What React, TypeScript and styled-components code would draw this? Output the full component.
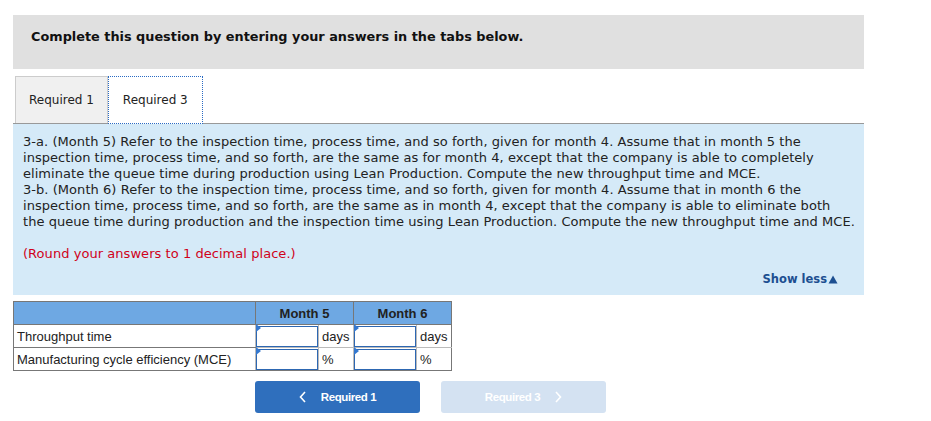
import React from "react";
import styled, { createGlobalStyle } from "styled-components";

const GlobalStyle = createGlobalStyle`
  body {
    margin: 0;
    background: #ffffff;
    font-family: "DejaVu Sans", Verdana, sans-serif;
  }
`;

const Page = styled.div`
  width: 851px;
  padding: 15px 0 0 13px;
`;

const Banner = styled.div`
  height: 54px;
  box-sizing: border-box;
  background: #e0e0e0;
  padding: 14px 0 0 18px;
  font-size: 12.85px;
  font-weight: bold;
  color: #111;
`;

const TabBar = styled.div`
  display: flex;
  align-items: flex-end;
  margin-top: 7px;
  padding-left: 2px;
  border-bottom: 1px solid #999;
`;

const Tab = styled.div<{ $active?: boolean }>`
  height: ${(p) => (p.$active ? 48 : 47)}px;
  box-sizing: border-box;
  padding: 0 ${(p) => (p.$active ? 14 : 13)}px;
  display: flex;
  align-items: center;
  font-size: 12px;
  color: #222;
  background: ${(p) => (p.$active ? "#ffffff" : "#f0f0f0")};
  border: ${(p) => (p.$active ? "1px dotted #2a6bc4" : "1px solid #cccccc")};
  border-bottom: ${(p) => (p.$active ? "1px dotted #2a6bc4" : "none")};
  margin-bottom: ${(p) => (p.$active ? -1 : 0)}px;
  position: relative;
`;

const Panel = styled.div`
  background: #d5eaf8;
  padding: 10px 10px 9px 10px;
  height: 171px;
  box-sizing: border-box;
  display: flex;
  flex-direction: column;
`;

const Question = styled.p`
  margin: 0;
  font-size: 13px;
  letter-spacing: 0.05px;
  line-height: 16px;
  white-space: nowrap;
  color: #222;
`;

const Hint = styled.p`
  margin: 16px 0 0;
  font-size: 13px;
  letter-spacing: 0.05px;
  line-height: 16px;
  color: #d0021b;
`;

const ShowLess = styled.div`
  margin-top: auto;
  align-self: flex-end;
  margin-right: 16px;
  font-size: 11.5px;
  font-weight: bold;
  color: #1d4f91;
  display: flex;
  align-items: center;
  gap: 1px;
`;

const Table = styled.table`
  margin-top: 6px;
  border-collapse: collapse;
  font-family: "Liberation Sans", Arial, sans-serif;
  font-size: 13px;
  color: #222;
`;

const HeadCell = styled.th<{ $w: number }>`
  width: ${(p) => p.$w}px;
  height: 22px;
  padding: 0;
  background: #6ea8e3;
  border: 1px solid #777;
  font-weight: bold;
  text-align: center;
  font-size: 13px;
`;

const LabelCell = styled.td`
  height: 22px;
  padding: 0 0 0 3px;
  border: 1px solid #777;
  border-right-color: #bbb;
`;

const InputCell = styled.td`
  padding: 0;
  border: 1px solid #bbb;
  width: 62px;
`;

const Field = styled.div`
  height: 21px;
  box-sizing: border-box;
  border: 1.5px solid #2d67b2;
  background: #fff;
  position: relative;
  &::before {
    content: "";
    position: absolute;
    left: 0;
    top: 0;
    border-left: 5px solid #3478cf;
    border-bottom: 4px solid transparent;
    border-top: 4px solid transparent;
    transform: translate(-1px, -3px);
  }
`;

const UnitCell = styled.td<{ $last?: boolean }>`
  padding: 0 0 0 3px;
  border: 1px solid #bbb;
  border-right-color: ${(p) => (p.$last ? "#777" : "#bbb")};
`;

const Row = styled.tr<{ $last?: boolean }>`
  & > td {
    ${(p) => (p.$last ? "border-bottom-color: #777;" : "")}
  }
`;

const Nav = styled.div`
  display: flex;
  gap: 21px;
  margin: 10px 0 0 242px;
`;

const NavButton = styled.button<{ $disabled?: boolean }>`
  width: 165px;
  height: 32px;
  border: none;
  border-radius: 3px;
  background: ${(p) => (p.$disabled ? "#d4e2f2" : "#2f6fbd")};
  color: #fff;
  font-family: "Liberation Sans", Arial, sans-serif;
  font-size: 11.5px;
  font-weight: bold;
  letter-spacing: -0.4px;
  display: flex;
  align-items: center;
  justify-content: center;
  gap: 14px;
  padding: 0;
`;

const Chevron = ({ dir }: { dir: "left" | "right" }) => (
  <svg width="8" height="12" viewBox="0 0 8 12">
    <path
      d={dir === "left" ? "M6 1 L1.5 6 L6 11" : "M2 1 L6.5 6 L2 11"}
      fill="none"
      stroke="#fff"
      strokeWidth="1.6"
    />
  </svg>
);

const questionLines = [
  "3-a. (Month 5) Refer to the inspection time, process time, and so forth, given for month 4. Assume that in month 5 the",
  "inspection time, process time, and so forth, are the same as for month 4, except that the company is able to completely",
  "eliminate the queue time during production using Lean Production. Compute the new throughput time and MCE.",
  "3-b. (Month 6) Refer to the inspection time, process time, and so forth, given for month 4. Assume that in month 6 the",
  "inspection time, process time, and so forth, are the same as in month 4, except that the company is able to eliminate both",
  "the queue time during production and the inspection time using Lean Production. Compute the new throughput time and MCE.",
];

const rows = [
  { label: "Throughput time", unit: "days" },
  { label: "Manufacturing cycle efficiency (MCE)", unit: "%" },
];

export default function App() {
  return (
    <Page>
      <GlobalStyle />
      <Banner>Complete this question by entering your answers in the tabs below.</Banner>
      <TabBar>
        <Tab>Required 1</Tab>
        <Tab $active>Required 3</Tab>
      </TabBar>
      <Panel>
        <Question>
          {questionLines.map((line, i) => (
            <React.Fragment key={i}>
              {line}
              <br />
            </React.Fragment>
          ))}
        </Question>
        <Hint>(Round your answers to 1 decimal place.)</Hint>
        <ShowLess>
          Show less
          <svg width="10" height="9" viewBox="0 0 10 9">
            <path d="M5 0.5 L9.5 8.5 L0.5 8.5 Z" fill="#1d4f91" />
          </svg>
        </ShowLess>
      </Panel>
      <Table>
        <thead>
          <tr>
            <HeadCell $w={241} />
            <HeadCell $w={97} colSpan={2}>Month 5</HeadCell>
            <HeadCell $w={97} colSpan={2}>Month 6</HeadCell>
          </tr>
        </thead>
        <tbody>
          {rows.map((r, i) => (
            <Row key={r.label} $last={i === rows.length - 1}>
              <LabelCell>{r.label}</LabelCell>
              <InputCell>
                <Field />
              </InputCell>
              <UnitCell>{r.unit}</UnitCell>
              <InputCell>
                <Field />
              </InputCell>
              <UnitCell $last>{r.unit}</UnitCell>
            </Row>
          ))}
        </tbody>
      </Table>
      <Nav>
        <NavButton>
          <Chevron dir="left" />
          Required 1
        </NavButton>
        <NavButton $disabled>
          Required 3
          <Chevron dir="right" />
        </NavButton>
      </Nav>
    </Page>
  );
}
